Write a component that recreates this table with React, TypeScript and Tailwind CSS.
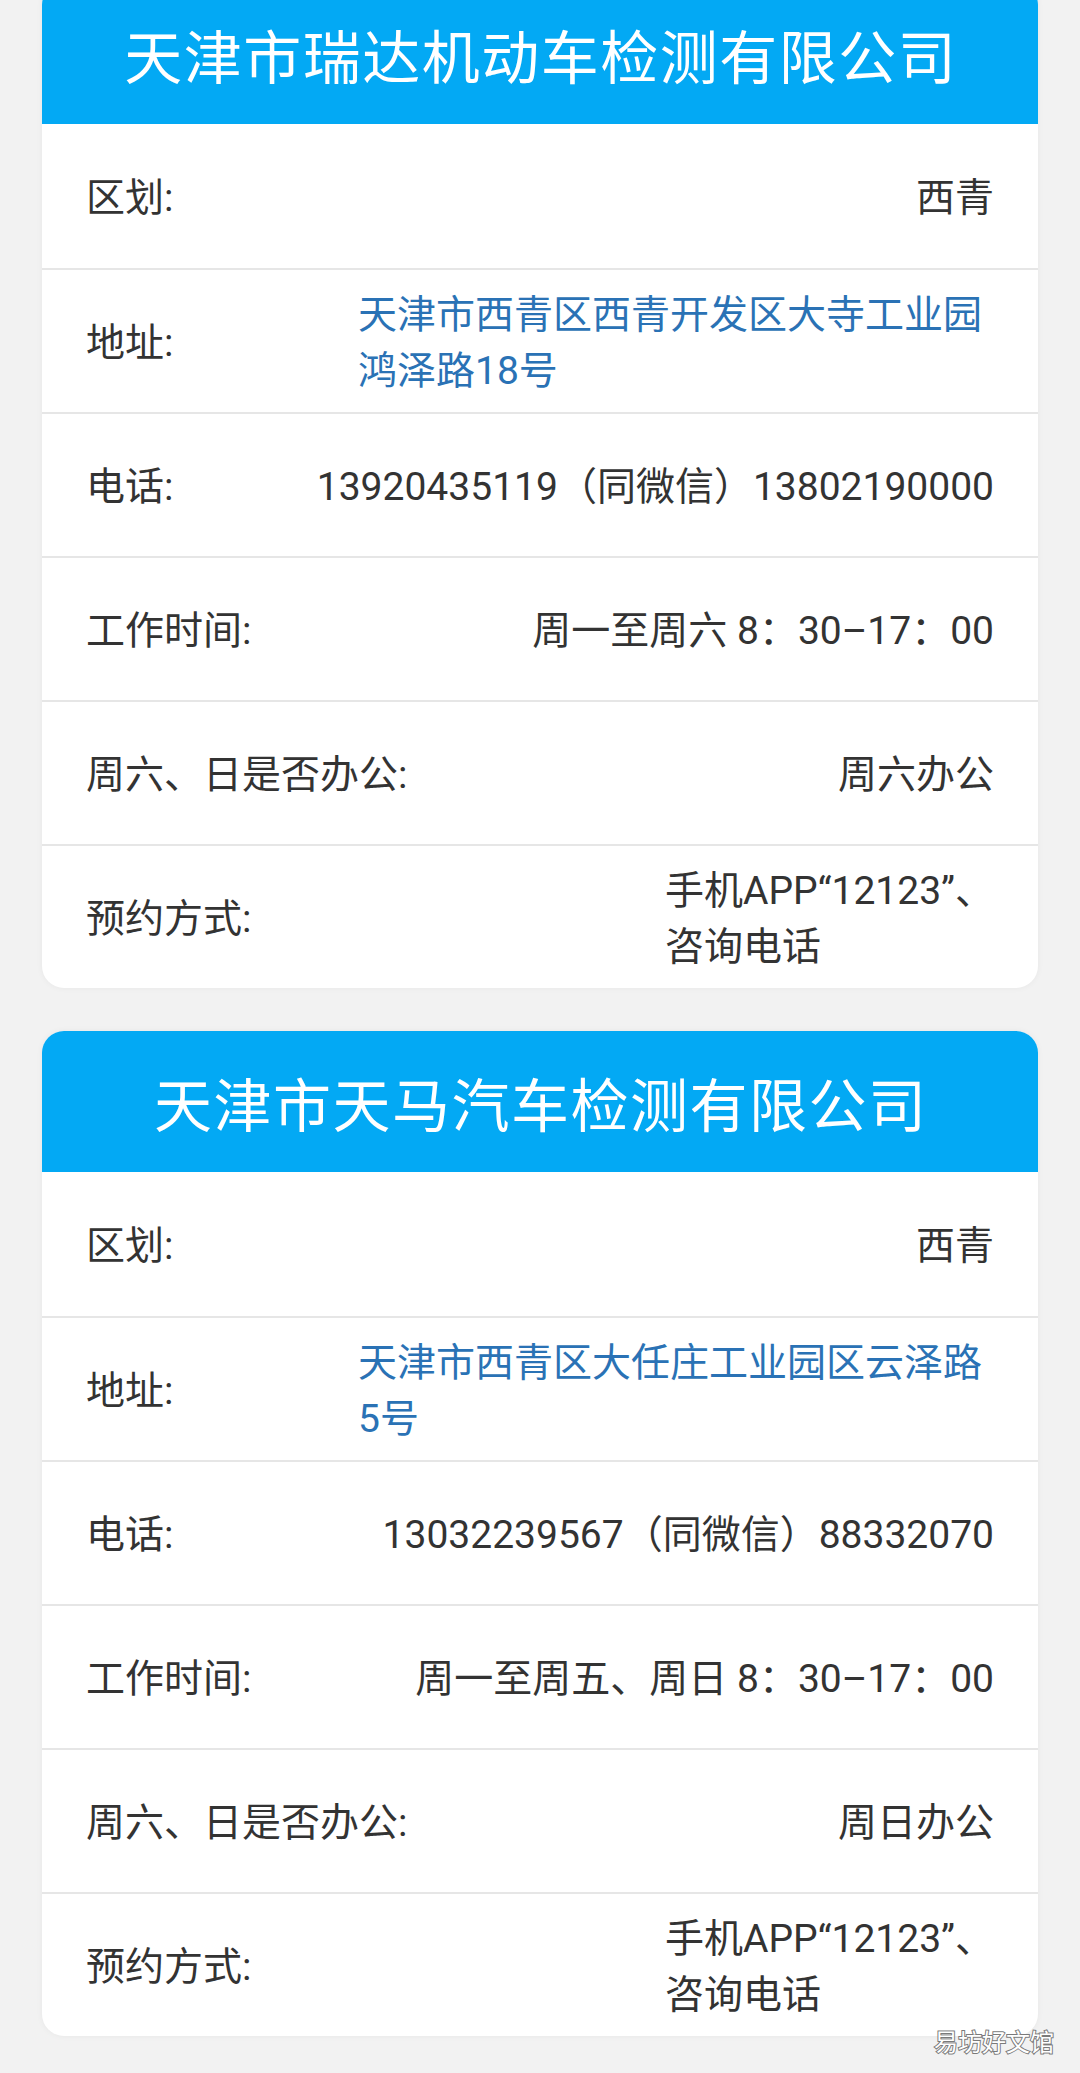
import React from "react";

type Row = { label: string; value: React.ReactNode; kind?: "addr" | "multi" };

const FONT = "font-['Roboto','Noto_Sans_CJK_SC',sans-serif]";

function InfoRow({ row, first }: { row: Row; first: boolean }) {
  return (
    <div
      className={
        "flex h-[144px] items-center justify-between px-[44px] pt-[4px] " +
        (first ? "" : "border-t-2 border-[#e6e6e6]")
      }
    >
      <div className="shrink-0 whitespace-nowrap text-[39px] leading-[56px] text-[#333333]">
        {row.label}
      </div>
      {row.kind === "addr" ? (
        <div className="w-[636px] shrink-0 text-left text-[39px] leading-[56px] text-[#2a72b5]">
          {row.value}
        </div>
      ) : row.kind === "multi" ? (
        <div className="ml-auto text-left text-[39px] leading-[56px] text-[#333333]">
          {row.value}
        </div>
      ) : (
        <div className="whitespace-nowrap text-right text-[39px] leading-[56px] text-[#333333]">
          {row.value}
        </div>
      )}
    </div>
  );
}

function Card({ title, rows }: { title: string; rows: Row[] }) {
  return (
    <div className="overflow-hidden rounded-[22px] bg-white shadow-[0_0_6px_rgba(0,0,0,0.05)]">
      <div className="flex h-[141px] items-center justify-center bg-[#03a9f4] pt-[10px]">
        <div className="whitespace-nowrap pl-[1.5px] text-[58px] leading-none tracking-[1.5px] text-white">
          {title}
        </div>
      </div>
      {rows.map((r, i) => (
        <InfoRow key={i} row={r} first={i === 0} />
      ))}
    </div>
  );
}

export default function App() {
  const rows1: Row[] = [
    { label: "区划:", value: "西青" },
    {
      label: "地址:",
      kind: "addr",
      value: (
        <>
          <div className="whitespace-nowrap">天津市西青区西青开发区大寺工业园</div>
          <div className="whitespace-nowrap">鸿泽路18号</div>
        </>
      ),
    },
    { label: "电话:", value: "13920435119（同微信）13802190000" },
    { label: "工作时间:", value: "周一至周六 8：30–17：00" },
    { label: "周六、日是否办公:", value: "周六办公" },
    {
      label: "预约方式:",
      kind: "multi",
      value: (
        <>
          <div className="whitespace-nowrap">手机APP“12123”、</div>
          <div className="whitespace-nowrap">咨询电话</div>
        </>
      ),
    },
  ];
  const rows2: Row[] = [
    { label: "区划:", value: "西青" },
    {
      label: "地址:",
      kind: "addr",
      value: (
        <>
          <div className="whitespace-nowrap">天津市西青区大任庄工业园区云泽路</div>
          <div className="whitespace-nowrap">5号</div>
        </>
      ),
    },
    { label: "电话:", value: "13032239567（同微信）88332070" },
    { label: "工作时间:", value: "周一至周五、周日 8：30–17：00" },
    { label: "周六、日是否办公:", value: "周日办公" },
    {
      label: "预约方式:",
      kind: "multi",
      value: (
        <>
          <div className="whitespace-nowrap">手机APP“12123”、</div>
          <div className="whitespace-nowrap">咨询电话</div>
        </>
      ),
    },
  ];

  return (
    <div className={"relative min-h-[2073px] overflow-hidden bg-[#f2f2f2] " + FONT}>
      <div className="-mt-[17px] flex flex-col gap-[43px] px-[42px] pb-[33px]">
        <Card title="天津市瑞达机动车检测有限公司" rows={rows1} />
        <Card title="天津市天马汽车检测有限公司" rows={rows2} />
      </div>
      <div className="absolute bottom-[18px] right-[26px] text-[24px] leading-none text-white [-webkit-text-stroke:2px_#7a7a7a] [paint-order:stroke_fill]">
        易坊好文馆
      </div>
    </div>
  );
}
